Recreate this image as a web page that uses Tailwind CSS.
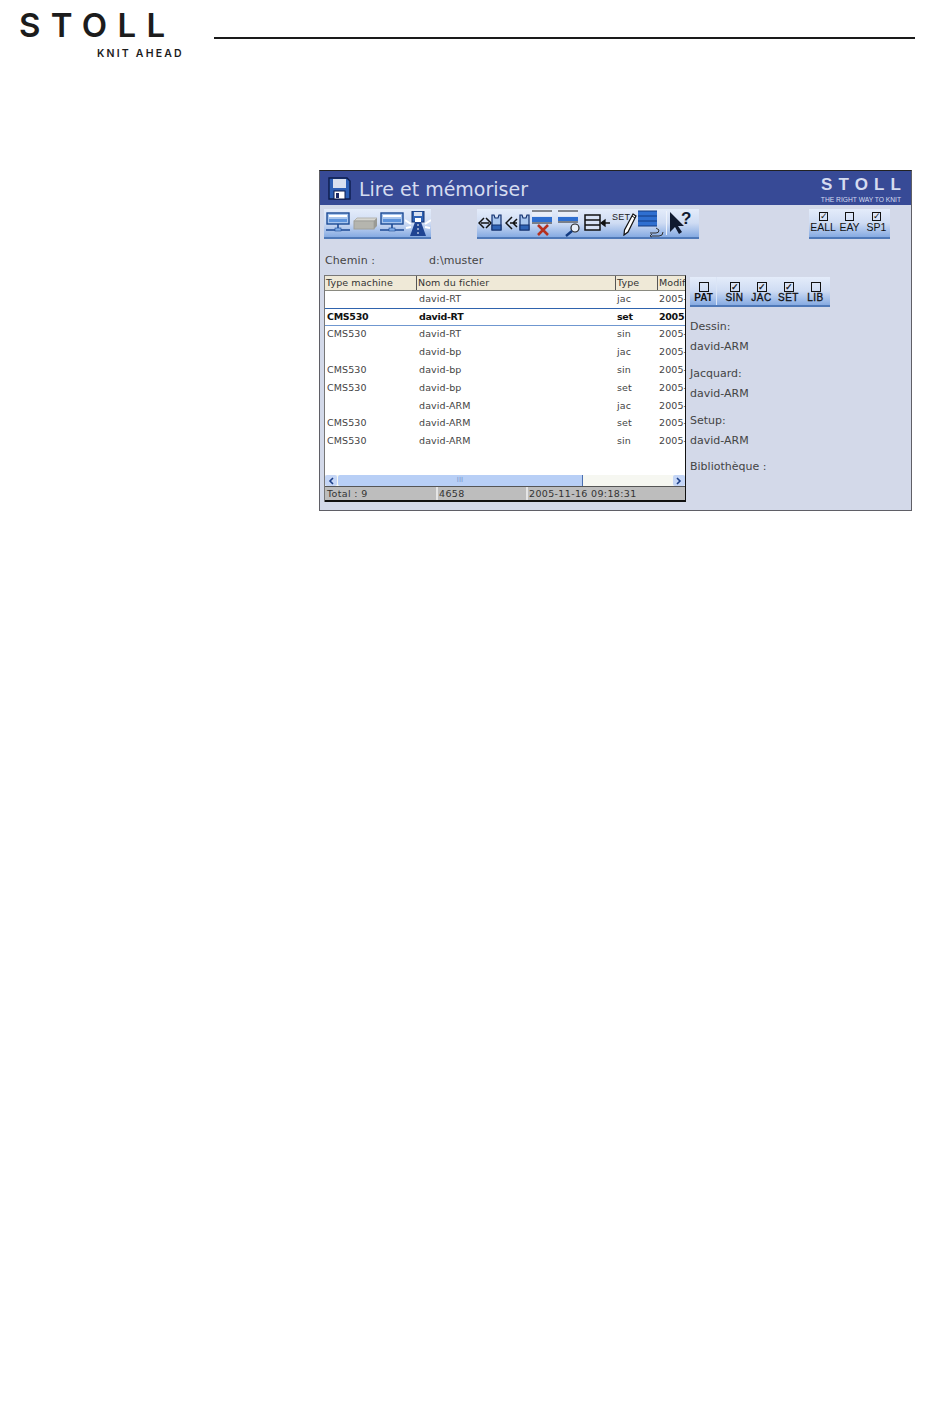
<!DOCTYPE html>
<html><head><meta charset="utf-8">
<script src="https://cdn.jsdelivr.net/npm/@tailwindcss/browser@4"></script>
</head>
<body class="bg-white">
<div class="w-[950px] h-[1420px] overflow-hidden bg-white font-['DejaVu_Sans',sans-serif]">
  <header class="flex h-[170px] items-start">
    <div class="ml-[19px] mt-[6px] w-[165px] shrink-0 flex flex-col font-['Inter',sans-serif]">
      <div class="text-[33px] leading-[38px] font-semibold tracking-[10.3px] text-[#1c1c1c] h-[38px] whitespace-nowrap">STOLL</div>
      <div class="ml-[78px] mt-[4px] text-[10.5px] leading-[12px] font-semibold tracking-[2.2px] text-[#1c1c1c] whitespace-nowrap">KNIT AHEAD</div>
    </div>
    <div class="ml-[30px] mt-[37px] w-[701px] h-[2px] bg-[#1a1a1a]"></div>
  </header>

  <main class="ml-[319px] w-[593px] h-[341px] border border-[#5f5f66] border-t-[#222] bg-[#d3d9e9] flex flex-col text-[#444]">
    <div class="h-[34px] bg-[#374a96] flex items-center shrink-0 pl-[8px] pr-[9px]">
      <svg width="23" height="23" viewBox="0 0 23 23" class="shrink-0"><path d="M1 1h18l3 3v18H1z" fill="#2d5fb5" stroke="#0c1c4c" stroke-width="1.4"/><rect x="5" y="2" width="13" height="9" fill="#d8e0f0"/><rect x="6" y="14" width="11" height="8" fill="#fff" stroke="#0c1c4c"/><rect x="8" y="16" width="3" height="5" fill="#1a2a66"/></svg>
      <div class="ml-[8px] mt-[2px] text-[19px] leading-[24px] text-[#d5dcf0] whitespace-nowrap">Lire et mémoriser</div>
      <div class="ml-auto flex flex-col items-end font-['Liberation_Sans',sans-serif] text-[#d5dcf0]">
        <div class="text-[17px] leading-[18px] font-bold tracking-[6.1px] mr-[-5px] mt-[3px]">STOLL</div>
        <div class="text-[6.7px] leading-[8px] mt-[2px] mr-[1px] whitespace-nowrap">THE RIGHT WAY TO KNIT</div>
      </div>
    </div>

    <div class="flex items-start pt-[4px] pl-[4px] h-[34px] shrink-0">
      <div class="w-[107px] h-[30px] bg-gradient-to-b from-[#e4ecfa] via-[#cfdcf3] to-[#86abe2] border-b-2 border-[#4f79b8] flex items-center pl-[1px] shrink-0">
        <svg width="27" height="22" viewBox="0 0 27 22"><rect x="2" y="1" width="22" height="11" fill="#a9c6ee" stroke="#1c4a95" stroke-width="1.4"/><rect x="4" y="3" width="18" height="2" fill="#fff"/><rect x="4" y="7" width="18" height="3" fill="#5c93dc"/><path d="M13 12v5M1 18h24" stroke="#1c4a95" stroke-width="1.6"/><rect x="10" y="16" width="6" height="3" fill="#7daae6" stroke="#1c4a95" stroke-width=".6"/></svg>
        <svg width="27" height="16" viewBox="0 0 27 16"><path d="M5 3h20l-3 3H2z" fill="#d7d7d2" stroke="#b5b5b0"/><rect x="2" y="6" width="20" height="8" fill="#b5b5ae" stroke="#a0a09a"/><path d="M22 6l3-3v8l-3 3z" fill="#9a9a94"/></svg>
        <svg width="26" height="22" viewBox="0 0 26 22"><rect x="2" y="1" width="22" height="11" fill="#a9c6ee" stroke="#1c4a95" stroke-width="1.4"/><rect x="4" y="3" width="18" height="2" fill="#fff"/><rect x="4" y="7" width="18" height="3" fill="#5c93dc"/><path d="M13 12v5M1 18h24" stroke="#1c4a95" stroke-width="1.6"/><rect x="10" y="16" width="6" height="3" fill="#7daae6" stroke="#1c4a95" stroke-width=".6"/></svg>
        <svg width="26" height="25" viewBox="0 0 26 25"><path d="M0 9l6 4M1 17l5-1M26 9l-6 4M25 17l-5-1" stroke="#fff" stroke-width="2"/><rect x="7" y="0" width="12" height="11" fill="#2f63b5" stroke="#12306e"/><rect x="9" y="1" width="8" height="4" fill="#d8e0f0"/><rect x="10" y="7" width="6" height="4" fill="#fff"/><path d="M10 11h6l5 14H5z" fill="#1f4492"/><path d="M13 13v10" stroke="#fff" stroke-dasharray="2 2"/></svg>
      </div>

      <div class="ml-[46px] w-[222px] h-[30px] bg-gradient-to-b from-[#e4ecfa] via-[#cfdcf3] to-[#86abe2] border-b-2 border-[#4f79b8] flex items-start pl-[1px] shrink-0">
        <svg width="27" height="26" viewBox="0 0 27 26" class="mt-[2px]"><path d="M6 7l-5 5 5 5M8 7l5 5-5 5M3 12h8" fill="none" stroke="#111" stroke-width="1.5"/><path d="M14 4h2l1 3h3l1-3h2v15h-9z" fill="#a9c6ee" stroke="#12306e" stroke-width="1.2"/><rect x="14" y="14" width="9" height="5" fill="#2f63b5" stroke="#12306e"/></svg>
        <svg width="27" height="26" viewBox="0 0 27 26" class="mt-[2px]"><path d="M7 6l-6 6 6 6M12 8l-4 4 4 4M5 12h7" fill="none" stroke="#111" stroke-width="1.5"/><path d="M15 4h2l1 3h3l1-3h2v15h-9z" fill="#a9c6ee" stroke="#12306e" stroke-width="1.2"/><rect x="15" y="14" width="9" height="5" fill="#2f63b5" stroke="#12306e"/></svg>
        <svg width="24" height="27" viewBox="0 0 24 27" class="mt-[1px]"><path d="M0 1h20M0 13h20" stroke="#222" stroke-width="1"/><rect x="0" y="2" width="20" height="4" fill="#e8eef8"/><rect x="0" y="7" width="20" height="5" fill="#2f6fd0"/><path d="M6 15l10 10M16 15L6 25" stroke="#b5301e" stroke-width="2.6"/></svg>
        <svg width="28" height="27" viewBox="0 0 28 27" class="mt-[1px]"><path d="M2 1h20M2 12h20" stroke="#222"/><rect x="2" y="2" width="20" height="4" fill="#e8eef8"/><rect x="2" y="7" width="20" height="4" fill="#2f6fd0"/><circle cx="19" cy="18" r="4" fill="#e8eef8" stroke="#222" stroke-width="1.2"/><path d="M16 21l-6 5" stroke="#123a80" stroke-width="2.4"/></svg>
        <svg width="28" height="24" viewBox="0 0 28 24" class="mt-[1px]"><rect x="1" y="5" width="15" height="15" fill="#d8e2f4" stroke="#111" stroke-width="1.5"/><path d="M1 10h15M1 15h15" stroke="#111" stroke-width="1.5"/><path d="M17 13h9M17 13l4-3v6z" stroke="#111" stroke-width="1.3" fill="#111"/></svg>
        <div class="relative w-[26px] h-[27px] shrink-0">
          <span class="absolute left-0 top-[3px] text-[9px] leading-[11px] font-['Liberation_Sans',sans-serif] tracking-[.3px] text-[#222]">SET</span>
          <svg width="14" height="24" viewBox="0 0 14 24" class="absolute left-[11px] top-[3px]"><path d="M10 2l3 2-8 16-4 3 .5-5z" fill="#fff" stroke="#111" stroke-width="1.2"/><path d="M9 4l3 2" stroke="#111"/></svg>
        </div>
        <svg width="28" height="28" viewBox="0 0 28 28" class="mt-[1px]"><rect x="0" y="1" width="19" height="15" fill="#2f6fd0"/><path d="M0 1h19M0 6h19M0 11h19M0 16h19" stroke="#123a80"/><path d="M12 23h6a3 3 0 0 0 3-3M18 18l3 2M14 26h7a4 4 0 0 0 4-4M14 24l-2 2 2 1" fill="none" stroke="#333" stroke-width="1"/></svg>
        <div class="w-px h-[24px] bg-[#eef3fb] mt-[2px] mr-[2px] shrink-0"></div>
        <svg width="26" height="26" viewBox="0 0 26 26" class="mt-[1px]"><path d="M1 2v20l5-5 4 7 3-2-4-6h6z" fill="#101a30"/><text x="12" y="14" font-size="17" font-weight="700" font-family="Liberation Sans" fill="#101a30">?</text></svg>
      </div>

      <div class="ml-[110px] w-[81px] h-[30px] bg-gradient-to-b from-[#e4ecfa] via-[#cfdcf3] to-[#86abe2] border-b-2 border-[#4f79b8] flex pl-[1px] shrink-0 font-['Liberation_Sans',sans-serif] text-[10.5px] leading-[11px] text-[#111]">
        <label class="w-[26px] flex flex-col items-center pt-[3px]"><span class="size-[9px] border border-[#111] text-[9px] leading-[7px] text-center">✓</span><span class="mt-[1px] whitespace-nowrap">EALL</span></label>
        <label class="w-[27px] flex flex-col items-center pt-[3px]"><span class="size-[9px] border border-[#111]"></span><span class="mt-[1px] whitespace-nowrap">EAY</span></label>
        <label class="w-[27px] flex flex-col items-center pt-[3px]"><span class="size-[9px] border border-[#111] text-[9px] leading-[7px] text-center">✓</span><span class="mt-[1px] whitespace-nowrap">SP1</span></label>
      </div>
    </div>

    <div class="flex h-[36px] shrink-0 pl-[5px] pt-[15px] text-[11px] leading-[14px] text-[#444] tracking-[.1px]">
      <span class="w-[104px]">Chemin :</span><span>d:\muster</span>
    </div>

    <div class="flex items-start pl-[4px]">
      <div class="w-[362px] h-[227px] shrink-0 bg-white border-r border-[#111] border-l border-l-[#777] border-t border-t-[#777] flex flex-col text-[9.5px] tracking-[.1px] text-[#444]">
        <div class="flex h-[15px] shrink-0 bg-[#efe9d7] border-b border-[#8a8a80] leading-[13px] text-[#333]">
          <div class="w-[92px] pl-[1px] border-r border-[#555]">Type machine</div>
          <div class="w-[199px] pl-[1px] border-r border-[#555]">Nom du fichier</div>
          <div class="w-[42px] pl-[1px] border-r border-[#555]">Type</div>
          <div class="flex-1 pl-[1px] overflow-hidden">Modif</div>
        </div>
        <div class="grid grid-cols-[94px_198px_42px_1fr] h-[17px] items-center overflow-hidden"><div class="pl-[2px]"></div><div>david-RT</div><div>jac</div><div class="whitespace-nowrap">2005-</div></div>
        <div class="grid grid-cols-[94px_198px_42px_1fr] h-[18px] items-center overflow-hidden border-y border-y-[#6f97d0] border-t-[#2f63ad] font-bold tracking-[-.3px] text-[#111]"><div class="pl-[2px]">CMS530</div><div>david-RT</div><div>set</div><div class="whitespace-nowrap">2005</div></div>
        <div class="grid grid-cols-[94px_198px_42px_1fr] h-[17px] items-center overflow-hidden"><div class="pl-[2px]">CMS530</div><div>david-RT</div><div>sin</div><div class="whitespace-nowrap">2005-</div></div>
        <div class="grid grid-cols-[94px_198px_42px_1fr] h-[18px] items-center overflow-hidden"><div class="pl-[2px]"></div><div>david-bp</div><div>jac</div><div class="whitespace-nowrap">2005-</div></div>
        <div class="grid grid-cols-[94px_198px_42px_1fr] h-[18px] items-center overflow-hidden"><div class="pl-[2px]">CMS530</div><div>david-bp</div><div>sin</div><div class="whitespace-nowrap">2005-</div></div>
        <div class="grid grid-cols-[94px_198px_42px_1fr] h-[18px] items-center overflow-hidden"><div class="pl-[2px]">CMS530</div><div>david-bp</div><div>set</div><div class="whitespace-nowrap">2005-</div></div>
        <div class="grid grid-cols-[94px_198px_42px_1fr] h-[18px] items-center overflow-hidden"><div class="pl-[2px]"></div><div>david-ARM</div><div>jac</div><div class="whitespace-nowrap">2005-</div></div>
        <div class="grid grid-cols-[94px_198px_42px_1fr] h-[17px] items-center overflow-hidden"><div class="pl-[2px]">CMS530</div><div>david-ARM</div><div>set</div><div class="whitespace-nowrap">2005-</div></div>
        <div class="grid grid-cols-[94px_198px_42px_1fr] h-[18px] items-center overflow-hidden"><div class="pl-[2px]">CMS530</div><div>david-ARM</div><div>sin</div><div class="whitespace-nowrap">2005-</div></div>
        <div class="flex-1"></div>
        <div class="flex h-[11px] shrink-0 bg-[#f6f7f1] items-stretch">
          <div class="w-[12px] bg-[#c5d6f6] rounded-[2px] flex items-center justify-center"><svg width="6" height="8" viewBox="0 0 6 8"><path d="M5 1L2 4l3 3" fill="none" stroke="#1c3f88" stroke-width="1.6"/></svg></div>
          <div class="ml-px w-[245px] bg-[#b8cff6] rounded-l-[2px] border-r border-[#4b6fb0] flex items-center justify-center text-[7px] leading-[7px] text-[#7a97cf]">III</div>
          <div class="flex-1"></div>
          <div class="w-[12px] bg-[#c5d6f6] rounded-[2px] flex items-center justify-center"><svg width="6" height="8" viewBox="0 0 6 8"><path d="M1 1l3 3-3 3" fill="none" stroke="#1c3f88" stroke-width="1.6"/></svg></div>
        </div>
        <div class="flex h-[16px] shrink-0 bg-[#bdbdbd] border-t border-[#555] border-b-2 border-b-[#111] leading-[13px] text-[#333] tracking-[.35px]">
          <div class="w-[113px] pl-[2px] border-r-2 border-[#e5e5e5]">Total : 9</div>
          <div class="w-[90px] pl-[1px] border-r-2 border-[#e5e5e5]">4658</div>
          <div class="pl-[1px] whitespace-nowrap">2005-11-16 09:18:31</div>
        </div>
      </div>

      <aside class="ml-[4px] flex-1 flex flex-col text-[11px] leading-[14px] text-[#444]">
        <div class="w-[140px] h-[30px] mt-[2px] bg-gradient-to-b from-[#e4ecfa] via-[#cfdcf3] to-[#86abe2] border-b-2 border-[#4f79b8] flex pl-[1px] font-['Liberation_Sans',sans-serif] font-bold text-[10px] leading-[10px] text-[#111]">
          <label class="w-[26px] flex flex-col items-center pt-[5px] border-r border-[#dbe5f6]"><span class="size-[10px] border border-[#111]"></span><span class="mt-[1px]">PAT</span></label>
          <label class="ml-[4px] w-[27px] flex flex-col items-center pt-[5px] font-normal tracking-[.5px] [-webkit-text-stroke:0.3px_#111]"><span class="size-[10px] border border-[#111] text-[9px] leading-[8px] text-center">✓</span><span class="mt-[1px]">SIN</span></label>
          <label class="w-[27px] flex flex-col items-center pt-[5px] font-normal tracking-[.5px] [-webkit-text-stroke:0.3px_#111]"><span class="size-[10px] border border-[#111] text-[9px] leading-[8px] text-center">✓</span><span class="mt-[1px]">JAC</span></label>
          <label class="w-[27px] flex flex-col items-center pt-[5px] font-normal tracking-[.5px] [-webkit-text-stroke:0.3px_#111]"><span class="size-[10px] border border-[#111] text-[9px] leading-[8px] text-center">✓</span><span class="mt-[1px]">SET</span></label>
          <label class="w-[27px] flex flex-col items-center pt-[5px] font-normal tracking-[.5px] [-webkit-text-stroke:0.3px_#111]"><span class="size-[10px] border border-[#111]"></span><span class="mt-[1px]">LIB</span></label>
        </div>
        <div class="mt-[13px]">Dessin:</div>
        <div class="mt-[6px]">david-ARM</div>
        <div class="mt-[13px]">Jacquard:</div>
        <div class="mt-[6px]">david-ARM</div>
        <div class="mt-[13px]">Setup:</div>
        <div class="mt-[6px]">david-ARM</div>
        <div class="mt-[12px]">Bibliothèque :</div>
      </aside>
    </div>
  </main>
</div>
</body></html>
